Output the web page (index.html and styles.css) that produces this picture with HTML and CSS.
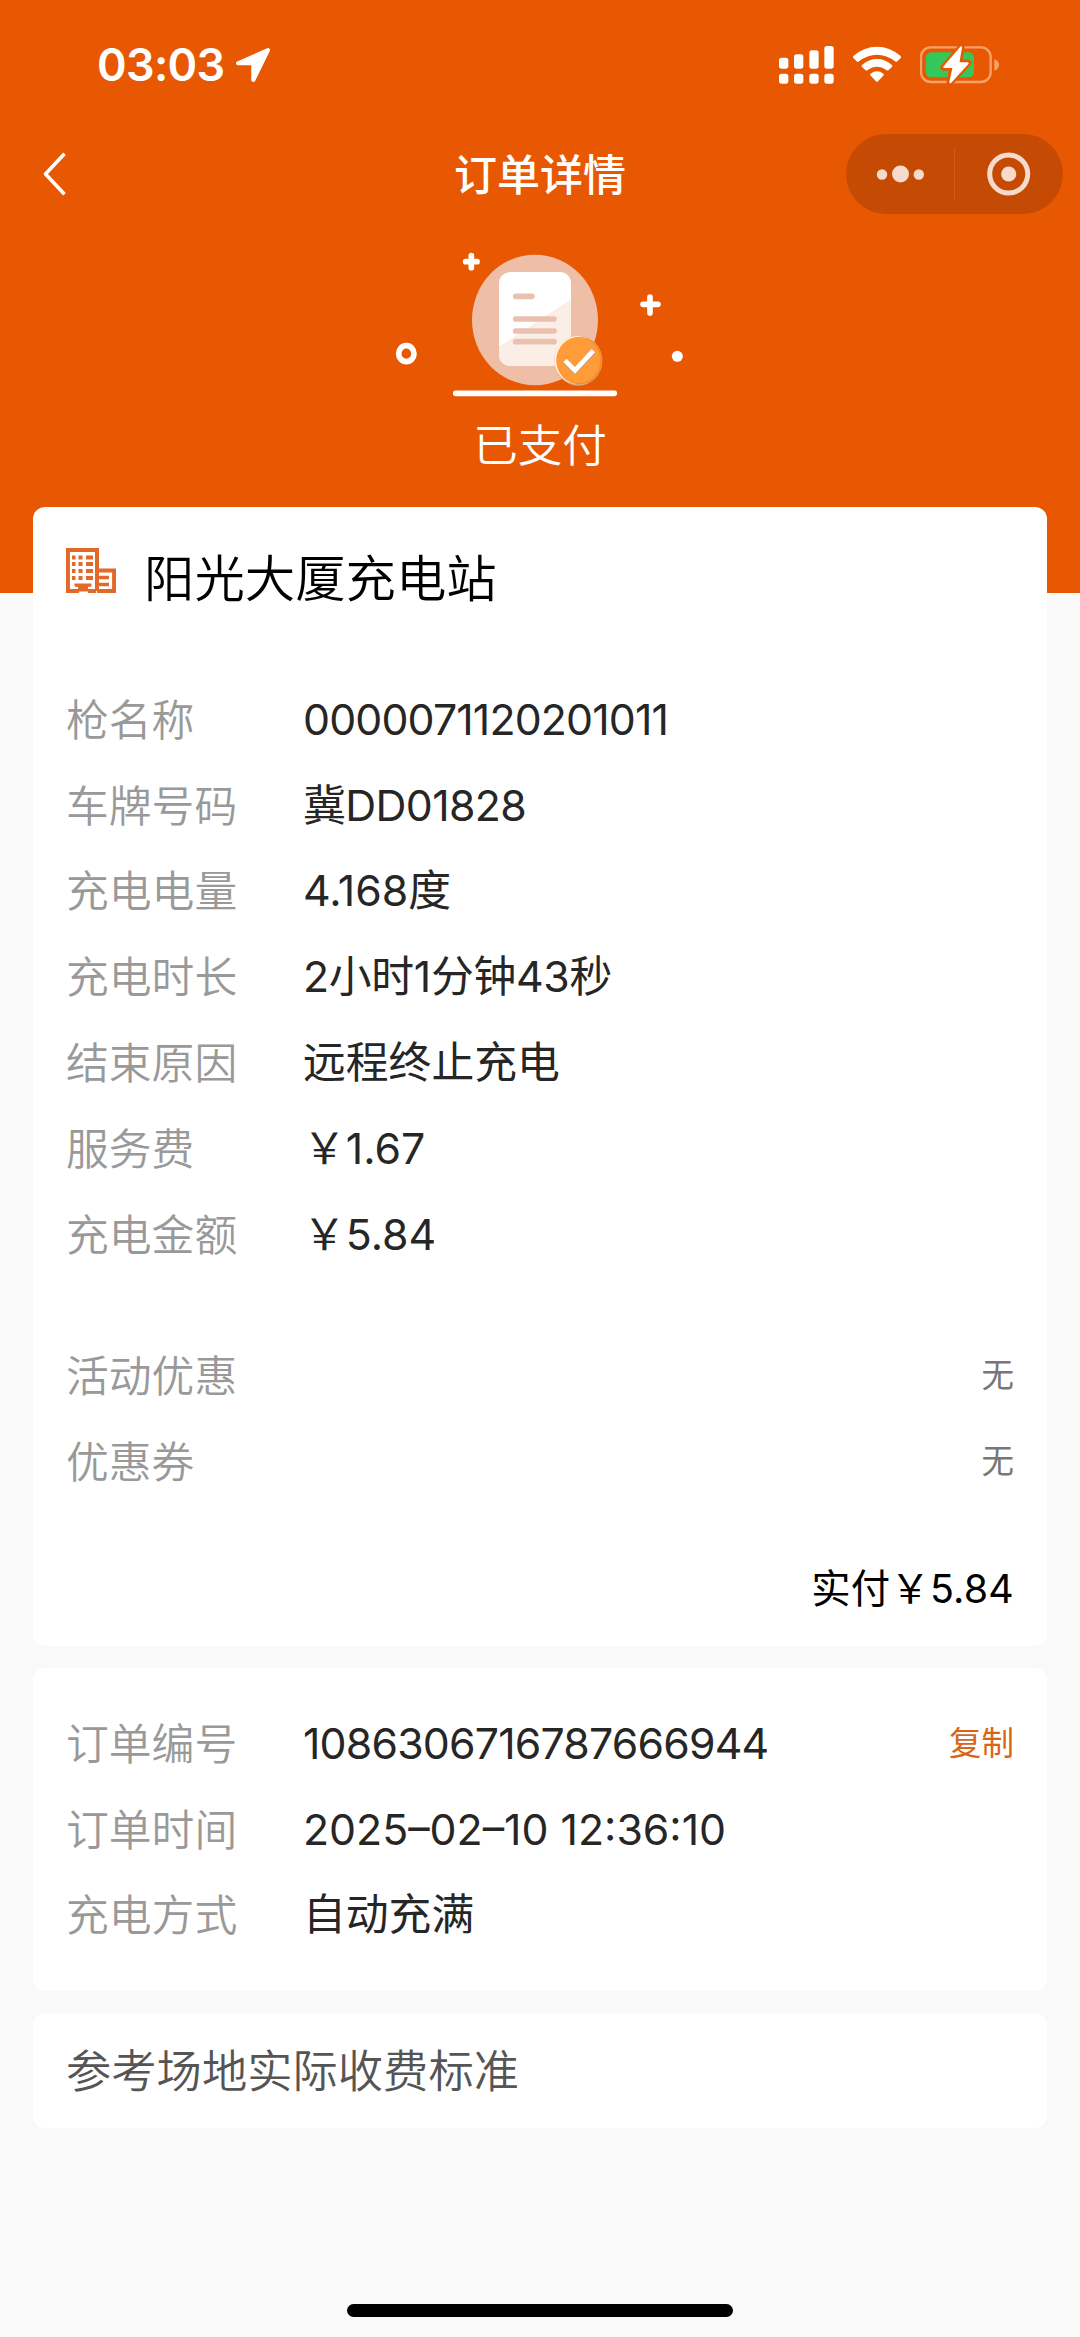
FILE: index.html
```html
<!DOCTYPE html>
<html lang="zh-CN">
<head>
<meta charset="utf-8">
<title>订单详情</title>
<link rel="stylesheet" href="styles.css">
</head>
<body>
<header class="header">
  <div class="statusbar">
    <div class="clock">
      <span class="time">03:03</span>
      <svg class="location" width="36" height="36" viewBox="0 0 36 36"><path d="M33 3 3 16.300H18.300V33Z" fill="#fff" stroke="#fff" stroke-width="4" stroke-linejoin="round"/></svg>
    </div>
    <div class="indicators">
      <svg width="55" height="38" viewBox="0 0 165 114" fill="#fff">
        <rect x="0" y="35" width="28" height="33" rx="8"/><rect x="45" y="25" width="28" height="43" rx="8"/><rect x="91" y="13" width="28" height="55" rx="8"/><rect x="136" y="0" width="28" height="68" rx="8"/>
        <rect x="0" y="83" width="28" height="30" rx="8"/><rect x="45" y="83" width="28" height="30" rx="8"/><rect x="91" y="83" width="28" height="30" rx="8"/><rect x="136" y="83" width="28" height="30" rx="8"/>
      </svg>
      <svg width="48" height="38" viewBox="336 134 144 114" fill="#fff">
        <path d="M337 170Q334 166 338 163Q370 136 408 136Q446 136 478 163Q482 166 479 170L469 180Q466 183 462 180Q437 160 408 160Q379 160 354 180Q350 183 347 180Z"/>
        <path d="M363 197Q360 193 364 190Q384 173 408 173Q432 173 452 190Q456 193 453 197L442 207Q439 209 436 206Q423 196 408 196Q393 196 380 206Q377 209 374 207Z"/>
        <path d="M388 222Q386 219 389 217Q398 210 408 210Q418 210 427 217Q430 219 428 222L411 240Q408 243 405 240Z"/>
      </svg>
      <svg width="79" height="38" viewBox="538 134 237 114">
        <rect x="541" y="138" width="209" height="104" rx="29" fill="none" stroke="#f7a269" stroke-width="7"/>
        <path d="M761 174Q775 179 775 191Q775 203 761 208Z" fill="#f7a269"/>
        <rect x="555" y="153" width="145" height="75" rx="16" fill="#34c759"/>
        <path d="M663 134 608 199H635L626 247 684 184H656Z" fill="#e85803" stroke="#e85803" stroke-width="18" stroke-linejoin="round"/>
        <path d="M661 138 611 197H639L629 243 681 186H653Z" fill="#fff" stroke="#fff" stroke-width="6" stroke-linejoin="round"/>
      </svg>
    </div>
  </div>
  <nav class="navbar">
    <svg class="back" width="24" height="44" viewBox="0 0 24 44"><path d="M21.500 1.800 2.500 22 21.500 42.200" fill="none" stroke="#fff" stroke-width="3.600" stroke-linejoin="round"/></svg>
    <h1 class="page-title">订单详情</h1>
    <div class="capsule">
      <svg width="217" height="80" viewBox="0 0 217 80" fill="#f6dacb">
        <circle cx="36" cy="40.500" r="5.200"/><circle cx="54.500" cy="40" r="8.500"/><circle cx="72.800" cy="40.500" r="5.200"/>
        <path d="M108.500 14V66" stroke="#cd5c1c" stroke-width="1"/>
        <circle cx="162.700" cy="40" r="19" fill="none" stroke="#f6dacb" stroke-width="5"/><circle cx="162.700" cy="40" r="7.600"/>
      </svg>
    </div>
  </nav>
  <div class="paid">
    <svg width="340" height="170" viewBox="0 0 1020 510">
      <defs><clipPath id="sheet"><rect x="387" y="126" width="216" height="282" rx="34"/></clipPath></defs>
      <ellipse cx="495" cy="270" rx="189" ry="196" fill="#efbea6"/>
      <g clip-path="url(#sheet)"><path d="M387 126H603V408H387Z" fill="#fff"/><path d="M603 208 387 350V408H603Z" fill="#fbeee7"/></g>
      <g stroke="#e9c1ae" stroke-width="17" stroke-linecap="round"><path d="M437 199H486M437 267H552M437 303H552M437 335H552"/></g>
      <ellipse cx="625" cy="392" rx="72" ry="75" fill="#d9ac84"/>
      <ellipse cx="622" cy="390" rx="69" ry="72" fill="#fff0df"/>
      <ellipse cx="628" cy="392" rx="68" ry="71" fill="#f58a22"/>
      <ellipse cx="625" cy="391" rx="66" ry="69" fill="#ff9c39"/>
      <path d="M585 393 615 423 670 364" fill="none" stroke="#d99c62" stroke-width="18"/>
      <path d="M585 391 615 421 670 362" fill="none" stroke="#fff" stroke-width="14"/>
      <g fill="none" stroke="#fff" stroke-width="17" stroke-linecap="round"><path d="M257 490H733M287 95H321M304 77V113M819 223H864M840 201V249"/></g>
      <ellipse cx="109" cy="371" rx="23" ry="24" fill="none" stroke="#fff" stroke-width="17"/>
      <circle cx="922" cy="379" r="16.500" fill="#fff"/>
    </svg>
    <p class="paid-text">已支付</p>
  </div>
</header>
<main class="content">
  <section class="card summary">
    <div class="station">
      <svg width="50" height="45" viewBox="0 0 50 45" fill="none" stroke="#e3692a">
        <path d="M1.900 43V1.900H31V43M31 22.600H48.100V43H31M0 43H13M22 43H30" stroke-width="4"/>
        <path d="M6 9.500H9.500M12.500 9.500H16.500M20 9.500H27M6 16H9.500M12.500 16H16.500M20 16H27M6 23H9.500M12.500 23H16.500M20 23H27M6 30H9.500M12.500 30H16.500M20 30H27" stroke-width="3.900"/>
        <path d="M8.500 35.500H25.500V38.500L22 39V43.500H12V39L8.500 38.500Z" fill="#e3692a" stroke="none"/>
        <path d="M33 29.500H43M33 36.500H43" stroke-width="3.300"/>
      </svg>
      <h2 class="station-name">阳光大厦充电站</h2>
    </div>
    <dl class="rows">
      <div class="row"><dt>枪名称</dt><dd class="gun">0000071120201011</dd></div>
      <div class="row"><dt>车牌号码</dt><dd class="plate">冀DD01828</dd></div>
      <div class="row"><dt>充电电量</dt><dd>4.168度</dd></div>
      <div class="row"><dt>充电时长</dt><dd class="duration">2小时1分钟43秒</dd></div>
      <div class="row"><dt>结束原因</dt><dd>远程终止充电</dd></div>
      <div class="row"><dt>服务费</dt><dd>&#xFFE5;1.67</dd></div>
      <div class="row"><dt>充电金额</dt><dd>&#xFFE5;5.84</dd></div>
    </dl>
    <dl class="rows discounts">
      <div class="row"><dt>活动优惠</dt><dd class="side">无</dd></div>
      <div class="row"><dt>优惠券</dt><dd class="side">无</dd></div>
    </dl>
    <p class="total">实付&#xFFE5;5.84</p>
  </section>
  <section class="card order">
    <dl class="rows">
      <div class="row"><dt>订单编号</dt><dd class="serial">1086306716787666944</dd><dd class="side copy">复制</dd></div>
      <div class="row"><dt>订单时间</dt><dd class="datetime">2025–02–10 12:36:10</dd></div>
      <div class="row"><dt>充电方式</dt><dd>自动充满</dd></div>
    </dl>
  </section>
  <section class="card note">参考场地实际收费标准</section>
</main>
<div class="home-indicator"></div>
</body>
</html>
```

FILE: styles.css
```css
* { box-sizing: border-box; margin: 0; padding: 0; }
body {
  width: 1080px;
  height: 2337px;
  display: flex;
  flex-direction: column;
  background: #f9f9f9;
  font-family: Inter, "Noto Sans CJK SC", sans-serif;
  color: #262626;
  overflow: hidden;
}
svg { display: block; flex: none; }
h1, h2 { font-weight: 400; }
.header { height: 593px; flex: none; background: #e85803; color: #fff; }
.statusbar { height: 128px; padding: 1px 81px 0 97px; display: flex; align-items: center; justify-content: space-between; }
.clock { display: flex; align-items: center; gap: 11px; }
.time { font-size: 45px; font-weight: 600; line-height: 60px; letter-spacing: -0.700px; }
.indicators { display: flex; gap: 19px; }
.navbar { height: 92px; padding: 0 17px 0 43px; display: grid; grid-template-columns: 217px 1fr 217px; align-items: center; }
.page-title { font-size: 43px; font-weight: 500; line-height: 60px; text-align: center; padding: 2px 26px 0 0; }
.capsule { width: 217px; height: 80px; border-radius: 40px; background: #c54a04; }
.paid { display: flex; flex-direction: column; align-items: center; padding-top: 10px; }
.paid-text { font-size: 44.500px; line-height: 64px; margin-top: 14px; font-weight: 350; }
.content { margin: -86px 33px 0; display: flex; flex-direction: column; gap: 22px; position: relative; }
.card { background: #fff; border-radius: 12px; padding: 0 33px; }
.summary { height: 1139px; padding-top: 32px; }
.station { display: flex; align-items: center; gap: 28px; height: 80px; color: #000; }
.station svg { margin-bottom: 17px; }
.station-name { font-size: 50.400px; line-height: 80px; font-weight: 350; }
.rows { font-size: 42.800px; line-height: 60px; font-weight: 350; }
.summary .rows { margin-top: 58px; }
.summary .discounts { margin-top: 56px; }
.row { display: flex; align-items: center; height: 85.800px; }
.row dt { width: 237px; padding-top: 2px; color: #999; }
.row dd { font-weight: 400; }
.gun { letter-spacing: -0.850px; }
.plate { letter-spacing: -0.600px; }
.duration { letter-spacing: -0.300px; }
.serial { letter-spacing: -0.800px; }
.datetime { letter-spacing: 0; }
.side { margin-left: auto; font-size: 32.500px; color: #777; }
.copy { color: #d96516; }
.total { font-size: 39.400px; line-height: 60px; text-align: right; color: #000; font-weight: 400; letter-spacing: 0.200px; margin-top: 54px; }
.order { height: 323px; padding-top: 33px; }
.note { height: 115px; font-size: 45.300px; line-height: 117px; color: #555; font-weight: 350; }
.home-indicator { width: 386px; height: 13px; border-radius: 7px; background: #000; margin: auto auto 20px; flex: none; }
```
